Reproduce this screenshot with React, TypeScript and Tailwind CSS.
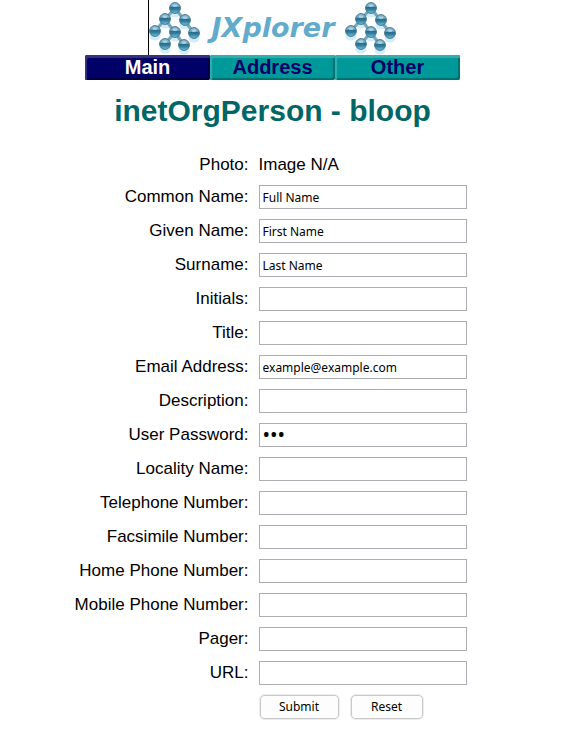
import React from 'react';

interface Field {
  id: string;
  label: string;
  value?: string;
  type?: string;
}

const fields: Field[] = [
  { id: 'cn', label: 'Common Name', value: 'Full Name' },
  { id: 'givenName', label: 'Given Name', value: 'First Name' },
  { id: 'sn', label: 'Surname', value: 'Last Name' },
  { id: 'initials', label: 'Initials' },
  { id: 'title', label: 'Title' },
  { id: 'mail', label: 'Email Address', value: 'example@example.com' },
  { id: 'description', label: 'Description' },
  { id: 'userPassword', label: 'User Password', value: 'abc', type: 'password' },
  { id: 'l', label: 'Locality Name' },
  { id: 'telephoneNumber', label: 'Telephone Number' },
  { id: 'facsimileTelephoneNumber', label: 'Facsimile Number' },
  { id: 'homePhone', label: 'Home Phone Number' },
  { id: 'mobile', label: 'Mobile Phone Number' },
  { id: 'pager', label: 'Pager' },
  { id: 'labeledURI', label: 'URL' },
];

const tabs = ['Main', 'Address', 'Other'];

const nodes = [
  [26, 8],
  [16, 19],
  [36, 20],
  [6, 31],
  [26, 32],
  [45, 33],
  [16, 44],
  [35, 45],
];

const TreeIcon: React.FC<{ id: string }> = ({ id }) => (
  <svg width="52" height="55" viewBox="0 0 52 55" aria-hidden="true">
    <defs>
      <linearGradient id={id} x1="0" y1="0" x2="0" y2="1">
        <stop offset="0" stopColor="#8fc0d6" />
        <stop offset="0.35" stopColor="#6fa9c4" />
        <stop offset="0.42" stopColor="#266b8d" />
        <stop offset="0.65" stopColor="#35809f" />
        <stop offset="1" stopColor="#7cc6e2" />
      </linearGradient>
    </defs>
    {nodes.map(([x, y]) => (
      <ellipse key={`glow-${x}-${y}`} cx={x} cy={y + 5} rx="5.5" ry="4.5" fill="#c6e9f7" opacity="0.8" />
    ))}
    <path
      d="M26 8L6 31M26 8L45 33M16 19L35 45M26 32L16 44"
      stroke="#78a6bb"
      strokeWidth="3"
      fill="none"
    />
    {nodes.map(([x, y]) => (
      <g key={`node-${x}-${y}`}>
        <circle cx={x} cy={y} r="5.4" fill={`url(#${id})`} stroke="#41768f" strokeWidth="1" />
        <ellipse cx={x} cy={y - 2.2} rx="2.4" ry="1.2" fill="#d3eaf3" opacity="0.6" />
      </g>
    ))}
  </svg>
);

const App: React.FC = () => {
  return (
    <main className="min-h-screen bg-white font-['Liberation_Sans',Arial,sans-serif] text-black">
      <header className="flex flex-col items-center pr-9">
        <div className="flex h-[55px] items-start border-l border-black">
          <TreeIcon id="tree-left" />
          <span className="mx-[11px] mt-3 font-['DejaVu_Sans',Verdana,sans-serif] text-[27px] leading-8 font-bold text-[#62abcd] italic">
            JXplorer
          </span>
          <TreeIcon id="tree-right" />
        </div>
        <nav className="flex">
          {tabs.map((tab, i) => (
            <a
              key={tab}
              href={`#${tab.toLowerCase()}`}
              className={`h-[25px] w-[125px] rounded-xs text-center text-xl leading-6 font-bold ${
                i === 0
                  ? 'bg-[#000066] text-white shadow-[inset_2px_3px_1px_#333380,inset_-2px_-2px_1px_#00003d]'
                  : 'bg-[#009999] text-[#000066] shadow-[inset_2px_3px_1px_#33adad,inset_-2px_-2px_1px_#006f6f]'
              }`}
            >
              {tab}
            </a>
          ))}
        </nav>
        <h1 className="mt-[13px] text-[30px] leading-9 font-bold text-[#006666]">inetOrgPerson - bloop</h1>
      </header>

      <form className="pr-12" onSubmit={(e) => e.preventDefault()}>
        <div className="mt-6 mb-2 flex justify-center gap-[10px] text-[17px] leading-6">
          <span className="w-[182px] text-right">Photo:</span>
          <span className="w-[208px]">Image N/A</span>
        </div>
        <div className="flex flex-col gap-[10px]">
          {fields.map((field) => (
            <div key={field.id} className="flex items-center justify-center gap-[10px]">
              <label htmlFor={field.id} className="w-[182px] text-right text-[17px] leading-6">
                {field.label}:
              </label>
              <input
                id={field.id}
                type={field.type ?? 'text'}
                defaultValue={field.value}
                className={`h-6 w-[208px] border border-[#abadb3] bg-white px-[3px] font-['Noto_Sans',sans-serif] ${
                  field.type === 'password' ? 'text-xl' : 'text-xs'
                }`}
              />
            </div>
          ))}
        </div>
        <div className="mt-[10px] flex justify-center gap-[10px] font-['Noto_Sans',sans-serif] text-xs">
          <div className="w-[182px]" />
          <div className="flex w-[208px] gap-3 pl-px">
            <button type="submit" className="h-6 w-[79px] rounded-sm border border-[#c8c8c8] bg-[#fdfdfd] outline outline-[#eeeeee]">
              Submit
            </button>
            <button type="reset" className="h-6 w-[72px] rounded-sm border border-[#c8c8c8] bg-[#fdfdfd] outline outline-[#eeeeee]">
              Reset
            </button>
          </div>
        </div>
      </form>
    </main>
  );
};

export default App;
